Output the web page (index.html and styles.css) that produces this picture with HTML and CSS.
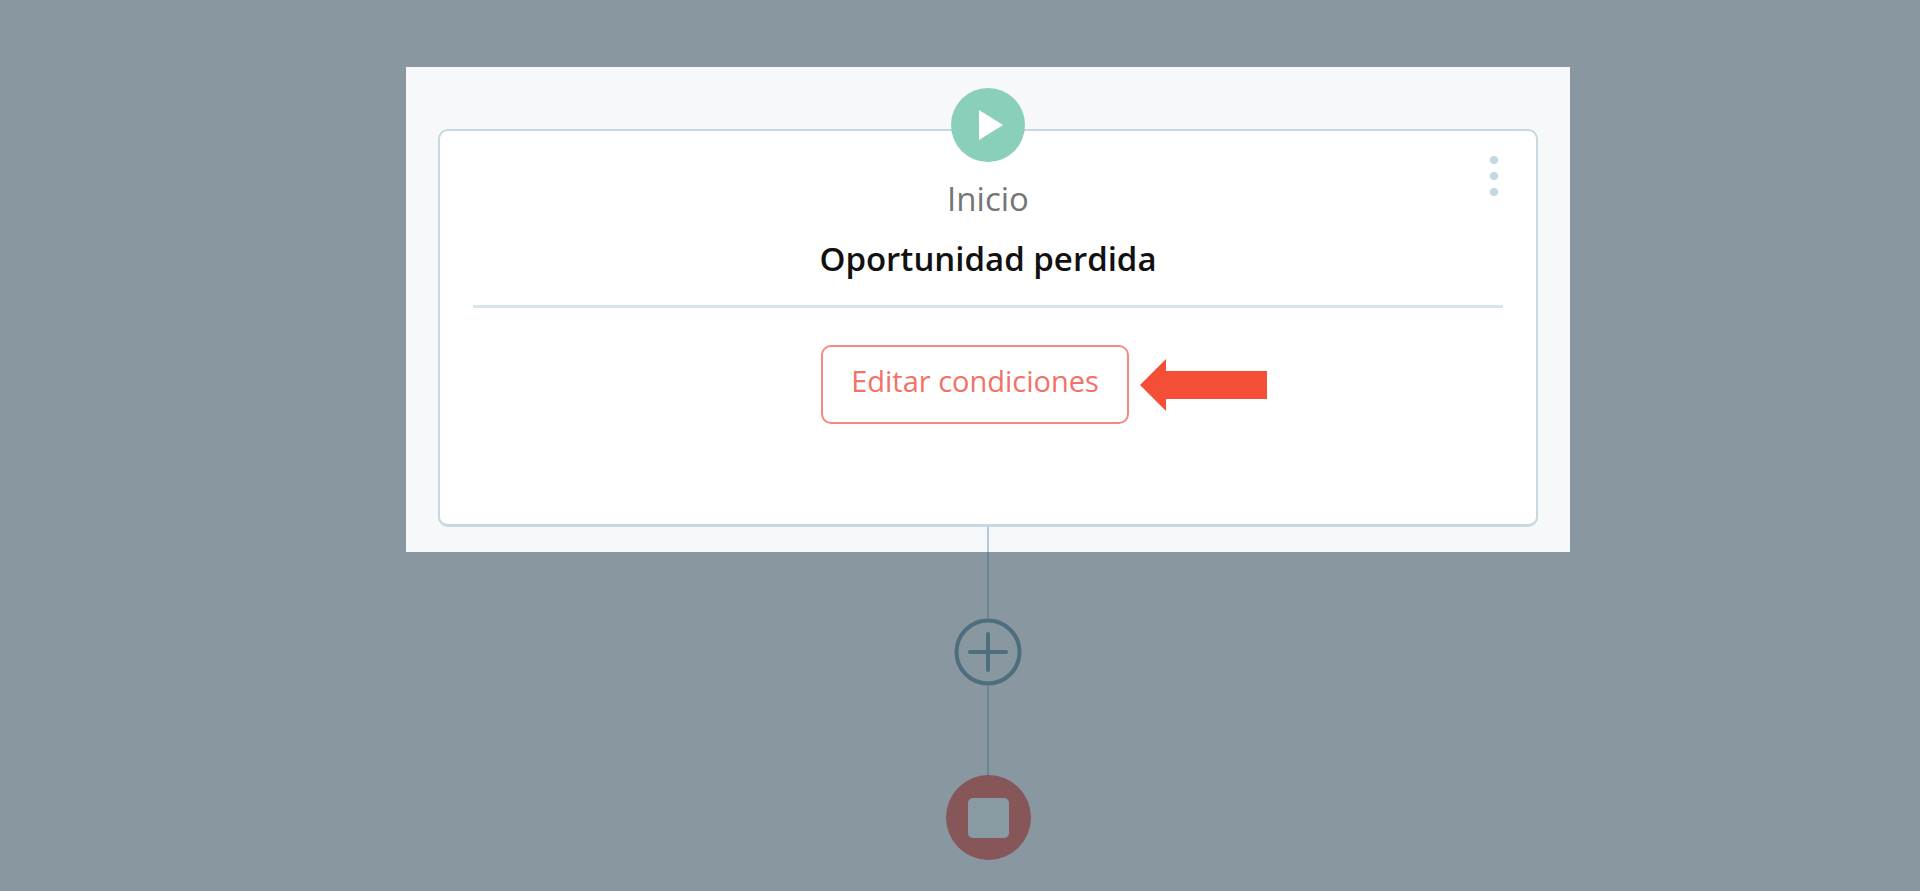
FILE: index.html
```html
<!DOCTYPE html>
<html lang="es">
<head>
    <meta charset="UTF-8">
    <meta name="viewport" content="width=device-width, initial-scale=1.0">
    <title>Oportunidad perdida</title>
    <link rel="stylesheet" href="styles.css">
</head>
<body>
    <main class="flow">
        <section class="panel">
            <div class="card">
                <svg class="start-icon" viewBox="0 0 74 74">
                    <circle cx="37" cy="37" r="37" fill="#8acfb9"/>
                    <path d="M28 22 L52 37 L28 52 Z" fill="#fff"/>
                </svg>
                <button class="menu" type="button" aria-label="Opciones">
                    <svg viewBox="0 0 8 40">
                        <circle cx="4" cy="4" r="4"/>
                        <circle cx="4" cy="20" r="4"/>
                        <circle cx="4" cy="36" r="4"/>
                    </svg>
                </button>
                <p class="step">Inicio</p>
                <h1 class="title">Oportunidad perdida</h1>
                <hr class="divider">
                <div class="actions">
                    <button class="btn-edit" type="button">Editar condiciones</button>
                    <svg class="arrow" viewBox="0 0 127 52">
                        <path d="M0 26 L26 0 V12 H127 V40 H26 V52 Z" fill="#f44f36"/>
                    </svg>
                </div>
            </div>
            <div class="line line-panel"></div>
        </section>

        <div class="line line-top"></div>
        <button class="btn-add" type="button" aria-label="Agregar paso">
            <svg viewBox="0 0 68 68" fill="none" stroke="#4e6d7d" stroke-width="4">
                <circle cx="34" cy="34" r="31.5"/>
                <path d="M16 34 H52 M34 16 V52" stroke-linecap="round"/>
            </svg>
        </button>
        <div class="line line-bottom"></div>
        <svg class="stop-icon" viewBox="0 0 85 85">
            <circle cx="42.5" cy="42.5" r="42.5" fill="#865658"/>
            <rect x="22" y="23" width="41" height="40" rx="5" fill="#8a9aa2"/>
        </svg>
    </main>
</body>
</html>
```
FILE: styles.css
```css
* {
    box-sizing: border-box;
}
body {
    margin: 0;
    min-height: 100vh;
    background-color: #8997a0;
    font-family: "Open Sans", sans-serif;
}
.flow {
    display: flex;
    flex-direction: column;
    align-items: center;
    padding: 67px 0 31px 56px;
}
.panel {
    display: flex;
    flex-direction: column;
    align-items: center;
    width: 100%;
    max-width: 1164px;
    padding: 62px 32px 0;
    background-color: #f6f8fa;
}
.card {
    position: relative;
    width: 100%;
    padding: 38px 33px 100px;
    background-color: #fff;
    border: 2px solid #c6d8e1;
    border-bottom-width: 3px;
    border-radius: 10px;
    text-align: center;
}
.start-icon {
    position: absolute;
    top: -43px;
    left: 50%;
    width: 74px;
    height: 74px;
    transform: translateX(-50%);
}
.menu {
    position: absolute;
    top: 25px;
    right: 38px;
    padding: 0;
    border: none;
    background: none;
    cursor: pointer;
}
.menu svg {
    display: block;
    width: 8px;
    height: 40px;
    fill: #c3d7e3;
}
.step {
    margin: 0;
    color: #757575;
    font-size: 33px;
    line-height: 60px;
}
.title {
    margin: 0;
    color: #111;
    font-size: 33px;
    font-weight: 600;
    line-height: 60px;
}
.divider {
    height: 3px;
    margin: 16px 0 37px;
    border: none;
    background-color: #d7e4eb;
}
.actions {
    display: grid;
    grid-template-columns: 1fr auto 1fr;
    align-items: center;
    column-gap: 11px;
    padding-right: 26px;
}
.btn-edit {
    grid-column: 2;
    height: 79px;
    padding: 0 28px 8px;
    background-color: #fff;
    color: #f27267;
    border: 2px solid #f5897f;
    border-radius: 10px;
    font-family: inherit;
    font-size: 29px;
    cursor: pointer;
}
.arrow {
    width: 127px;
    height: 52px;
}
.line {
    width: 2px;
    background-color: #6c8594;
}
.line-panel {
    height: 25px;
    background-color: #b3cad7;
}
.line-top {
    height: 66px;
}
.line-bottom {
    height: 89px;
}
.btn-add {
    width: 68px;
    height: 68px;
    padding: 0;
    border: none;
    background: none;
    cursor: pointer;
}
.btn-add svg {
    display: block;
}
.stop-icon {
    width: 85px;
    height: 85px;
}
```
